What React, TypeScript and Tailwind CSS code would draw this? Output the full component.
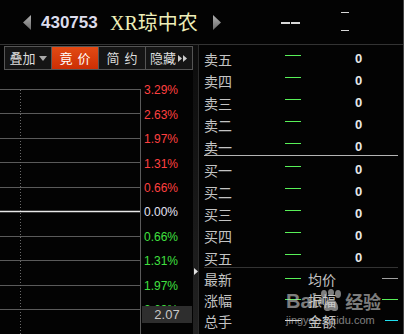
import React from "react";

const sans = "font-['Liberation_Sans','Noto_Sans_CJK_SC',sans-serif]";
const cjk = "font-['Noto_Sans_CJK_SC',sans-serif]";

const scale: { t: string; c: string }[] = [
  { t: "3.29%", c: "text-[#ff4040]" },
  { t: "2.63%", c: "text-[#ff4040]" },
  { t: "1.97%", c: "text-[#ff4040]" },
  { t: "1.31%", c: "text-[#ff4040]" },
  { t: "0.66%", c: "text-[#ff4040]" },
  { t: "0.00%", c: "text-[#e4e4f4]" },
  { t: "0.66%", c: "text-[#40e040]" },
  { t: "1.31%", c: "text-[#40e040]" },
  { t: "1.97%", c: "text-[#40e040]" },
  { t: "2.63%", c: "text-[#40e040]" },
];

const gridY = [19, 43, 68, 92, 117, 141, 166, 190, 215, 239];

const sells = ["卖五", "卖四", "卖三", "卖二", "卖一"];
const buys = ["买一", "买二", "买三", "买四", "买五"];

function Triangle({ dir }: { dir: "l" | "r" }) {
  return (
    <svg width="8" height="15" viewBox="0 0 8 15">
      <defs>
        <linearGradient id={"tg" + dir} x1="0" y1="0" x2="0" y2="1">
          <stop offset="0" stopColor="#b0b0b0" />
          <stop offset="1" stopColor="#6a6a6a" />
        </linearGradient>
      </defs>
      <polygon points={dir === "l" ? "8,0 8,15 0,7.5" : "0,0 0,15 8,7.5"} fill={"url(#tg" + dir + ")"} />
    </svg>
  );
}

function QuoteRow({ label, h }: { label: string; h: string }) {
  return (
    <div className={`flex items-start ${h}`}>
      <div className={`w-[81px] ${cjk} text-[14px] leading-[22px] text-[#c4c4c4]`}>{label}</div>
      <div className="w-[16px] h-px bg-[#58f058] mt-[7px]" />
      <div className="w-[54px]" />
      <div className={`${sans} font-bold text-[13px] leading-[22px] text-[#e8e8e8]`}>0</div>
    </div>
  );
}

function StatRow({ a, b, dashA, dashB, wB }: { a: string; b: string; dashA: string; dashB: string; wB: string }) {
  return (
    <div className="flex items-start h-[21px]">
      <div className={`w-[81px] ${cjk} text-[14px] leading-[21px] text-[#c4c4c4]`}>{a}</div>
      <div className={`w-[16px] h-px mt-[9px] ${dashA}`} />
      <div className="w-[7px]" />
      <div className={`w-[74px] ${cjk} text-[14px] leading-[21px] text-[#c4c4c4]`}>{b}</div>
      <div className="flex-1 flex justify-end pr-[5px]">
        <div className={`${wB} h-px mt-[9px] ${dashB}`} />
      </div>
    </div>
  );
}

export default function App() {
  return (
    <div className="relative w-[404px] h-[334px] bg-[#030303] overflow-hidden border-r border-[#444]">
      {/* header */}
      <div className="h-[45px] border-b border-[#333] flex items-center pl-[23px]">
        <Triangle dir="l" />
        <div className={`ml-[10px] w-[69px] ${sans} font-bold text-[17px] text-[#dcdcec] leading-none`}>430753</div>
        <div className="w-[103px] text-[20px] leading-none text-[#eeeeb8] font-['Liberation_Serif','Noto_Sans_CJK_SC',serif]">
          XR<span className={cjk}>琼中农</span>
        </div>
        <Triangle dir="r" />
        <div className="ml-[60px] flex gap-px mt-[2px]">
          <div className="w-[9px] h-[2px] bg-[#d8d8d8]" />
          <div className="w-[9px] h-[2px] bg-[#d8d8d8]" />
        </div>
        <div className="ml-[41px] flex flex-col gap-[17px] mt-[-2px]">
          <div className="w-[8px] h-px bg-[#d8d8d8]" />
          <div className="w-[8px] h-px bg-[#d8d8d8]" />
        </div>
      </div>

      <div className="flex h-[289px]">
        {/* left: toolbar + chart */}
        <div className="w-[193px] flex flex-col">
          <div className="mt-px ml-[4px] w-[189px] h-[24px] flex border border-[#555] bg-[#151515] text-[13px] text-[#dedede]">
            <div className={`w-[46px] flex items-center justify-center ${cjk}`}>
              叠加
              <svg width="8" height="5" viewBox="0 0 8 5" className="ml-[3px]">
                <polygon points="0,0 8,0 4,5" fill="#aaa" />
              </svg>
            </div>
            <div className={`w-[47px] border-l border-[#555] flex items-center justify-center bg-gradient-to-b from-[#e24a14] to-[#cc2e04] text-white tracking-[5px] pl-[5px] ${cjk}`}>
              竟价
            </div>
            <div className={`w-[47px] border-l border-[#555] flex items-center justify-center tracking-[5px] pl-[5px] ${cjk}`}>
              简约
            </div>
            <div className={`w-[47px] border-l border-[#555] flex items-center justify-center ${cjk}`}>
              隐藏
              <svg width="10" height="7" viewBox="0 0 10 7" className="ml-[2px]">
                <polygon points="0,0 4,3.5 0,7" fill="#ccc" />
                <polygon points="5,0 9,3.5 5,7" fill="#ccc" />
              </svg>
            </div>
          </div>

          <div className="relative flex flex-1">
            <svg width="141" height="264" className="shrink-0">
              {gridY.map((y, i) => (
                <line key={i} x1="0" x2="140" y1={y + 0.5} y2={y + 0.5} stroke={i === 5 ? "#e8e8e8" : "#5a5a5a"} strokeWidth={i === 5 ? 1.5 : 1} />
              ))}
              <line x1="140.5" x2="140.5" y1="19" y2="264" stroke="#5a5a5a" />
              <line x1="20.5" x2="20.5" y1="20" y2="264" stroke="#6a6a6a" strokeDasharray="1 2" />
            </svg>
            <div className={`pl-[3px] pt-[8px] ${sans} text-[12px]`}>
              {scale.map((s, i) => (
                <div key={i} className={`h-[24.44px] flex items-center ${s.c}`}>{s.t}</div>
              ))}
            </div>
            <div className={`absolute left-[142px] top-[236px] w-[50px] h-[17px] bg-[#2e2e2e] flex items-center justify-center ${sans} text-[13px] text-[#c8c8c8]`}>
              2.07
            </div>
          </div>
        </div>

        {/* splitter */}
        <div className="w-[6px] bg-gradient-to-b from-[#0c0c0c] to-[#222] border-r border-[#2c2c2c] flex items-start pt-[223px]">
          <svg width="4" height="7" viewBox="0 0 4 7" className="ml-[1px]">
            <polygon points="0,0 4,3.5 0,7" fill="#e0e0e0" />
          </svg>
        </div>

        {/* right: quotes */}
        <div className="flex-1 pl-[5px] pt-[3px] flex flex-col">
          {sells.map((s, i) => (
            <QuoteRow key={s} label={s} h={i === 4 ? "h-[19px]" : "h-[22px]"} />
          ))}
          <div className="w-[194px] h-px bg-[#b4b4b4]" />
          <div className="pt-[3px]">
            {buys.map((s, i) => (
              <QuoteRow key={s} label={s} h={i === 4 ? "h-[20px]" : "h-[22px]"} />
            ))}
          </div>
          <div className="w-[194px] h-px bg-[#333]" />
          <div className="pt-[1px]">
            <StatRow a="最新" b="均价" dashA="bg-[#58f058]" dashB="bg-[#a0a0a0]" wB="w-[16px]" />
            <StatRow a="涨幅" b="振幅" dashA="bg-[#58f058]" dashB="bg-[#58f058]" wB="w-[16px]" />
            <StatRow a="总手" b="金额" dashA="bg-[#d8d8d8]" dashB="bg-[#20e0f0]" wB="w-[13px]" />
          </div>
        </div>
      </div>

      {/* watermark */}
      <div className="absolute left-[286px] top-[289px] flex flex-col items-start opacity-60 pointer-events-none">
        <div className="flex items-center text-[#cfcfcf]">
          <span className={`${sans} font-bold text-[20px] leading-none`}>Bai</span>
          <svg width="26" height="24" viewBox="0 0 26 24" className="mx-px">
            <ellipse cx="6" cy="5" rx="3" ry="4" fill="#cfcfcf" />
            <ellipse cx="13" cy="3.5" rx="3" ry="3.5" fill="#cfcfcf" />
            <ellipse cx="20" cy="5" rx="3" ry="4" fill="#cfcfcf" />
            <ellipse cx="3" cy="12" rx="2.5" ry="3.5" fill="#cfcfcf" />
            <path d="M13 10 C8 10 5 17 6 20 C7 23 11 22 13 21 C15 22 19 23 20 20 C21 17 18 10 13 10 Z" fill="#cfcfcf" />
          </svg>
          <span className={`${cjk} text-[18px] leading-none font-bold`}>经验</span>
        </div>
        <span className={`${sans} text-[11px] leading-none mt-[2px] text-[#cfcfcf]`}>jingyan.baidu.com</span>
      </div>
    </div>
  );
}
